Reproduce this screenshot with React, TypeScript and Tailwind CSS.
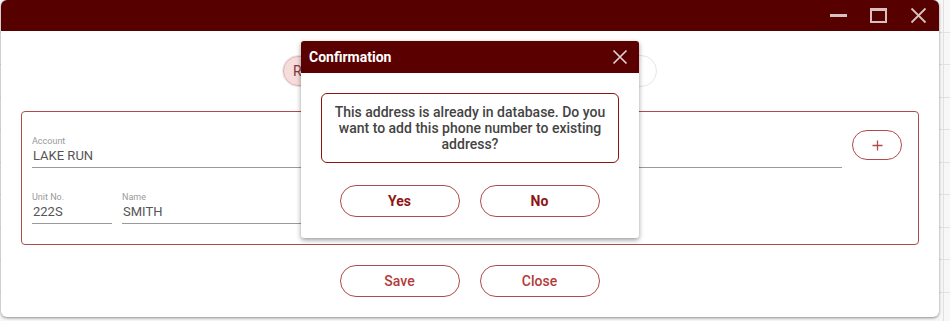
import React from "react";

const font = { fontFamily: "Roboto, 'Liberation Sans', sans-serif" };

function Field({ label, value, className }: { label: string; value: string; className: string }) {
  return (
    <div className={className}>
      <div className="text-[9px] leading-[11px] text-[#9a9a9a]">{label}</div>
      <div className="text-[13px] leading-[16px] text-[#555] pl-[1px] pt-[1px] pb-[3px] border-b border-[#9a9a9a]">{value}</div>
    </div>
  );
}

export default function App() {
  return (
    <div className="relative w-[950px] h-[321px] overflow-hidden bg-[#f7f7f7]" style={font}>
      {/* background rows */}
      <div className="flex flex-col">
        {Array.from({ length: 10 }).map((_, i) => (
          <div key={i} className="h-[32.5px] border-b border-[#e2e2e2] shrink-0" />
        ))}
      </div>
      <div className="absolute top-0 bottom-0 left-[943px] w-px bg-[#e0e0e0]" />

      {/* main window */}
      <div className="absolute left-[1px] top-0 w-[938px] h-[317px] bg-white rounded-[6px] shadow-[0_1px_3px_rgba(0,0,0,0.45)] flex flex-col overflow-hidden">
        <div className="h-[31px] bg-[#560000] flex items-center justify-end pr-[12px] gap-[23px] shrink-0">
          <div className="w-[17px] h-[3px] bg-[#d9bfbf]" />
          <div className="w-[17px] h-[15px] border-[2px] border-[#d9bfbf] border-t-[3px]" />
          <svg width="17" height="17" viewBox="0 0 17 17">
            <path d="M1.5 1.5 L15.5 15.5 M15.5 1.5 L1.5 15.5" stroke="#d9bfbf" strokeWidth="1.8" />
          </svg>
        </div>
        <div className="flex pt-[24px] pl-[281px]">
          <div className="w-[375px] h-[32px] rounded-full border border-[#e6e6e6] flex">
            <div className="w-[40px] h-[30px] rounded-full bg-[#f7dcdc] border border-[#e5b3b3] text-[14px] text-[#7a3a3a] flex items-center pl-[9px]">R</div>
          </div>
        </div>
        <div className="mx-[20px] mt-[24px] h-[134px] border border-[#b14a4a] rounded-[4px] px-[10px] pt-[24px] flex flex-col gap-[24px]">
          <div className="flex items-start gap-[10px]">
            <Field label="Account" value="LAKE RUN" className="w-[810px]" />
            <button className="mt-[-6px] w-[50px] h-[30px] rounded-full border border-[#b14a4a] flex items-center justify-center">
              <svg width="11" height="11" viewBox="0 0 11 11">
                <path d="M5.5 0.5 V10.5 M0.5 5.5 H10.5" stroke="#b14a4a" strokeWidth="1.3" />
              </svg>
            </button>
          </div>
          <div className="flex gap-[10px]">
            <Field label="Unit No." value="222S" className="w-[80px]" />
            <Field label="Name" value="SMITH" className="w-[300px]" />
          </div>
        </div>
        <div className="flex justify-center gap-[20px] mt-[20px] pr-[1px]">
          <button className="w-[120px] h-[32px] rounded-full border border-[#b14a4a] text-[14px] font-medium text-[#b33a3a]">Save</button>
          <button className="w-[120px] h-[32px] rounded-full border border-[#b14a4a] text-[14px] font-medium text-[#b33a3a]">Close</button>
        </div>
      </div>

      {/* confirmation dialog */}
      <div className="absolute left-[301px] top-[41px] w-[338px] h-[197px] bg-white rounded-[3px] shadow-[0_2px_5px_rgba(0,0,0,0.4)] flex flex-col overflow-hidden">
        <div className="h-[32px] bg-[#5a0000] flex items-center justify-between pl-[8px] pr-[11px] shrink-0">
          <span className="text-[14px] font-bold text-white">Confirmation</span>
          <svg width="16" height="16" viewBox="0 0 16 16">
            <path d="M1.5 1.5 L14.5 14.5 M14.5 1.5 L1.5 14.5" stroke="#e0d0d0" strokeWidth="1.7" />
          </svg>
        </div>
        <div className="mx-[20px] mt-[20px] h-[70px] border border-[#8f1212] rounded-[6px] flex items-center justify-center text-center text-[14px] font-medium leading-[16px] text-[#444] px-[8px]">
          This address is already in database. Do you want to add this phone number to existing address?
        </div>
        <div className="flex justify-center gap-[20px] mt-[22px] pr-[1px]">
          <button className="w-[120px] h-[32px] rounded-full border border-[#b14a4a] text-[14px] font-bold text-[#8f1515]">Yes</button>
          <button className="w-[120px] h-[32px] rounded-full border border-[#b14a4a] text-[14px] font-bold text-[#8f1515]">No</button>
        </div>
      </div>
    </div>
  );
}
